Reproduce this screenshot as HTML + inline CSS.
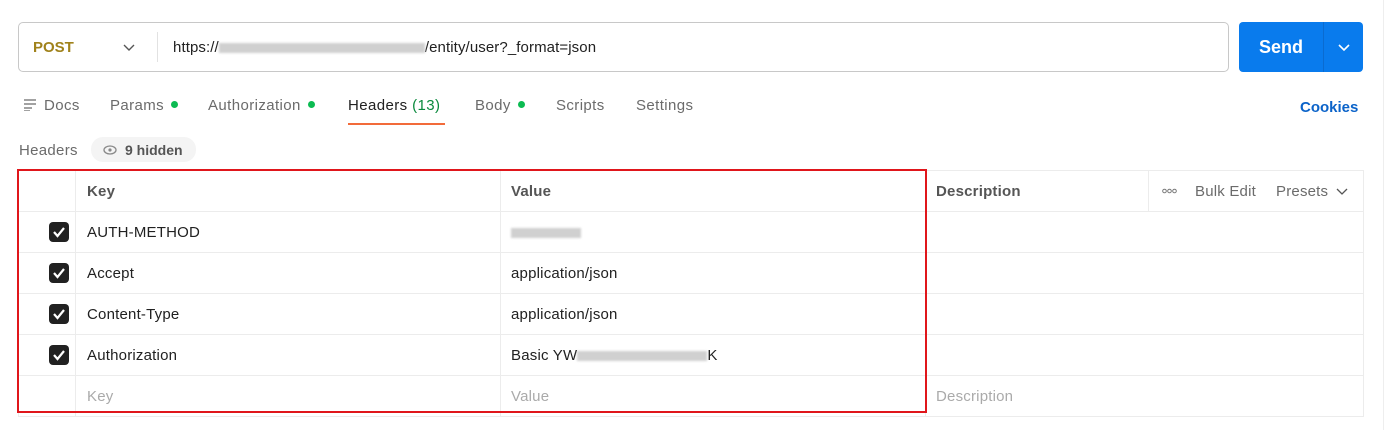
<!DOCTYPE html>
<html><head><style>
body{margin:0;width:1386px;height:430px;background:#fff;font-family:"Liberation Sans",sans-serif;position:relative;overflow:hidden;color:#212121}
.a{position:absolute}
.t{font-size:15px;color:#6b6b6b;top:97px;letter-spacing:0.4px}
.dot{display:inline-block;width:7px;height:7px;border-radius:50%;background:#0cbb52;margin-left:7px;vertical-align:2px}
.cell{position:absolute;font-size:15px;color:#212121;letter-spacing:0.2px}
.cb{position:absolute;left:49px;width:20px;height:20px;background:#212121;border-radius:4px}
.hl{position:absolute;left:18px;width:1345px;height:1px;background:#ececec}
.vl{position:absolute;top:170px;width:1px;height:246px;background:#ececec}
.blur{display:inline-block;height:10px;background:#d0d0d0;vertical-align:middle;filter:blur(1px)}
</style></head><body>
<div class="a" style="left:18px;top:22px;width:1209px;height:48px;border:1px solid #c8c8c8;border-radius:5px"></div>
<div class="a" style="left:33px;top:39px;font-size:15px;font-weight:bold;color:#a0821b">POST</div>
<svg class="a" style="left:123px;top:44px" width="12" height="8"><path d="M1 1l5 5 5-5" fill="none" stroke="#555" stroke-width="1.4"/></svg>
<div class="a" style="left:157px;top:32px;width:1px;height:30px;background:#e2e2e2"></div>
<div class="a" style="left:173px;top:39px;font-size:15px;color:#212121;letter-spacing:0.1px">https://<span class="blur" style="width:206px"></span>/entity/user?_format=json</div>
<div class="a" style="left:1239px;top:22px;width:124px;height:50px;background:#097bed;border-radius:4px"></div>
<div class="a" style="left:1323px;top:22px;width:1px;height:50px;background:#0a6bd0"></div>
<div class="a" style="left:1259px;top:37px;font-size:18px;font-weight:bold;color:#fff">Send</div>
<svg class="a" style="left:1338px;top:44px" width="12" height="8"><path d="M1 1l5 5 5-5" fill="none" stroke="#fff" stroke-width="1.6"/></svg>
<div class="a" style="left:1383px;top:0;width:1px;height:430px;background:#eee"></div>
<svg class="a" style="left:24px;top:99px" width="14" height="12"><path d="M0 1h12M0 5h12M0 9h8M0 12h6" stroke="#6b6b6b" stroke-width="1.3"/></svg>
<div class="a t" style="left:44px">Docs</div>
<div class="a t" style="left:110px">Params<span class="dot"></span></div>
<div class="a t" style="left:208px">Authorization<span class="dot"></span></div>
<div class="a t" style="left:348px;color:#212121">Headers <span style="color:#0a8a3d">(13)</span></div>
<div class="a" style="left:348px;top:123px;width:97px;height:2px;background:#f26b3a"></div>
<div class="a t" style="left:475px">Body<span class="dot"></span></div>
<div class="a t" style="left:556px">Scripts</div>
<div class="a t" style="left:636px">Settings</div>
<div class="a" style="left:1300px;top:99px;font-size:15px;font-weight:bold;color:#0b63c9">Cookies</div>
<div class="a" style="left:19px;top:142px;font-size:15px;color:#6b6b6b;letter-spacing:0.3px">Headers</div>
<div class="a" style="left:91px;top:137px;width:105px;height:25px;background:#f4f4f4;border-radius:12px"></div>
<svg class="a" style="left:103px;top:145px" width="14" height="10"><ellipse cx="7" cy="5" rx="6" ry="4" fill="none" stroke="#888" stroke-width="1.3"/><circle cx="7" cy="5" r="1.6" fill="#888"/></svg>
<div class="a" style="left:125px;top:142px;font-size:14px;color:#555;font-weight:bold">9 hidden</div>
<div class="a" style="left:18px;top:170px;width:1344px;height:245px;border:1px solid #ececec"></div>
<div class="hl" style="top:211px"></div><div class="hl" style="top:252px"></div><div class="hl" style="top:293px"></div><div class="hl" style="top:334px"></div><div class="hl" style="top:375px"></div>
<div class="vl" style="left:75px"></div><div class="vl" style="left:500px"></div><div class="vl" style="left:925px"></div><div class="vl" style="left:1148px;height:41px"></div>
<div class="cell" style="left:87px;top:183px;font-weight:bold;color:#555">Key</div>
<div class="cell" style="left:511px;top:183px;font-weight:bold;color:#555">Value</div>
<div class="cell" style="left:936px;top:183px;font-weight:bold;color:#555">Description</div>
<svg class="a" style="left:1162px;top:188px" width="16" height="6"><g fill="none" stroke="#777" stroke-width="1"><circle cx="2.5" cy="3" r="1.8"/><circle cx="7.5" cy="3" r="1.8"/><circle cx="12.5" cy="3" r="1.8"/></g></svg>
<div class="cell" style="left:1195px;top:183px;color:#6b6b6b">Bulk Edit</div>
<div class="cell" style="left:1276px;top:183px;color:#6b6b6b">Presets</div>
<svg class="a" style="left:1336px;top:188px" width="12" height="8"><path d="M1 1l5 5 5-5" fill="none" stroke="#555" stroke-width="1.3"/></svg>
<div class="cb" style="top:222px"></div><div class="cb" style="top:263px"></div><div class="cb" style="top:304px"></div><div class="cb" style="top:345px"></div>
<svg class="a" style="left:49px;top:222px" width="20" height="143"><g fill="none" stroke="#fff" stroke-width="2.2"><path d="M5 10l3.5 4 6.5-8"/><path d="M5 51l3.5 4 6.5-8"/><path d="M5 92l3.5 4 6.5-8"/><path d="M5 133l3.5 4 6.5-8"/></g></svg>
<div class="cell" style="left:87px;top:224px">AUTH-METHOD</div>
<div class="cell" style="left:511px;top:224px"><span class="blur" style="width:70px"></span></div>
<div class="cell" style="left:87px;top:265px">Accept</div>
<div class="cell" style="left:511px;top:265px">application/json</div>
<div class="cell" style="left:87px;top:306px">Content-Type</div>
<div class="cell" style="left:511px;top:306px">application/json</div>
<div class="cell" style="left:87px;top:347px">Authorization</div>
<div class="cell" style="left:511px;top:347px">Basic YW<span class="blur" style="width:130px"></span>K</div>
<div class="cell" style="left:87px;top:388px;color:#aaa">Key</div>
<div class="cell" style="left:511px;top:388px;color:#aaa">Value</div>
<div class="cell" style="left:936px;top:388px;color:#aaa">Description</div>
<div class="a" style="left:17px;top:169px;width:906px;height:240px;border:2px solid #e0161b"></div>
</body></html>
